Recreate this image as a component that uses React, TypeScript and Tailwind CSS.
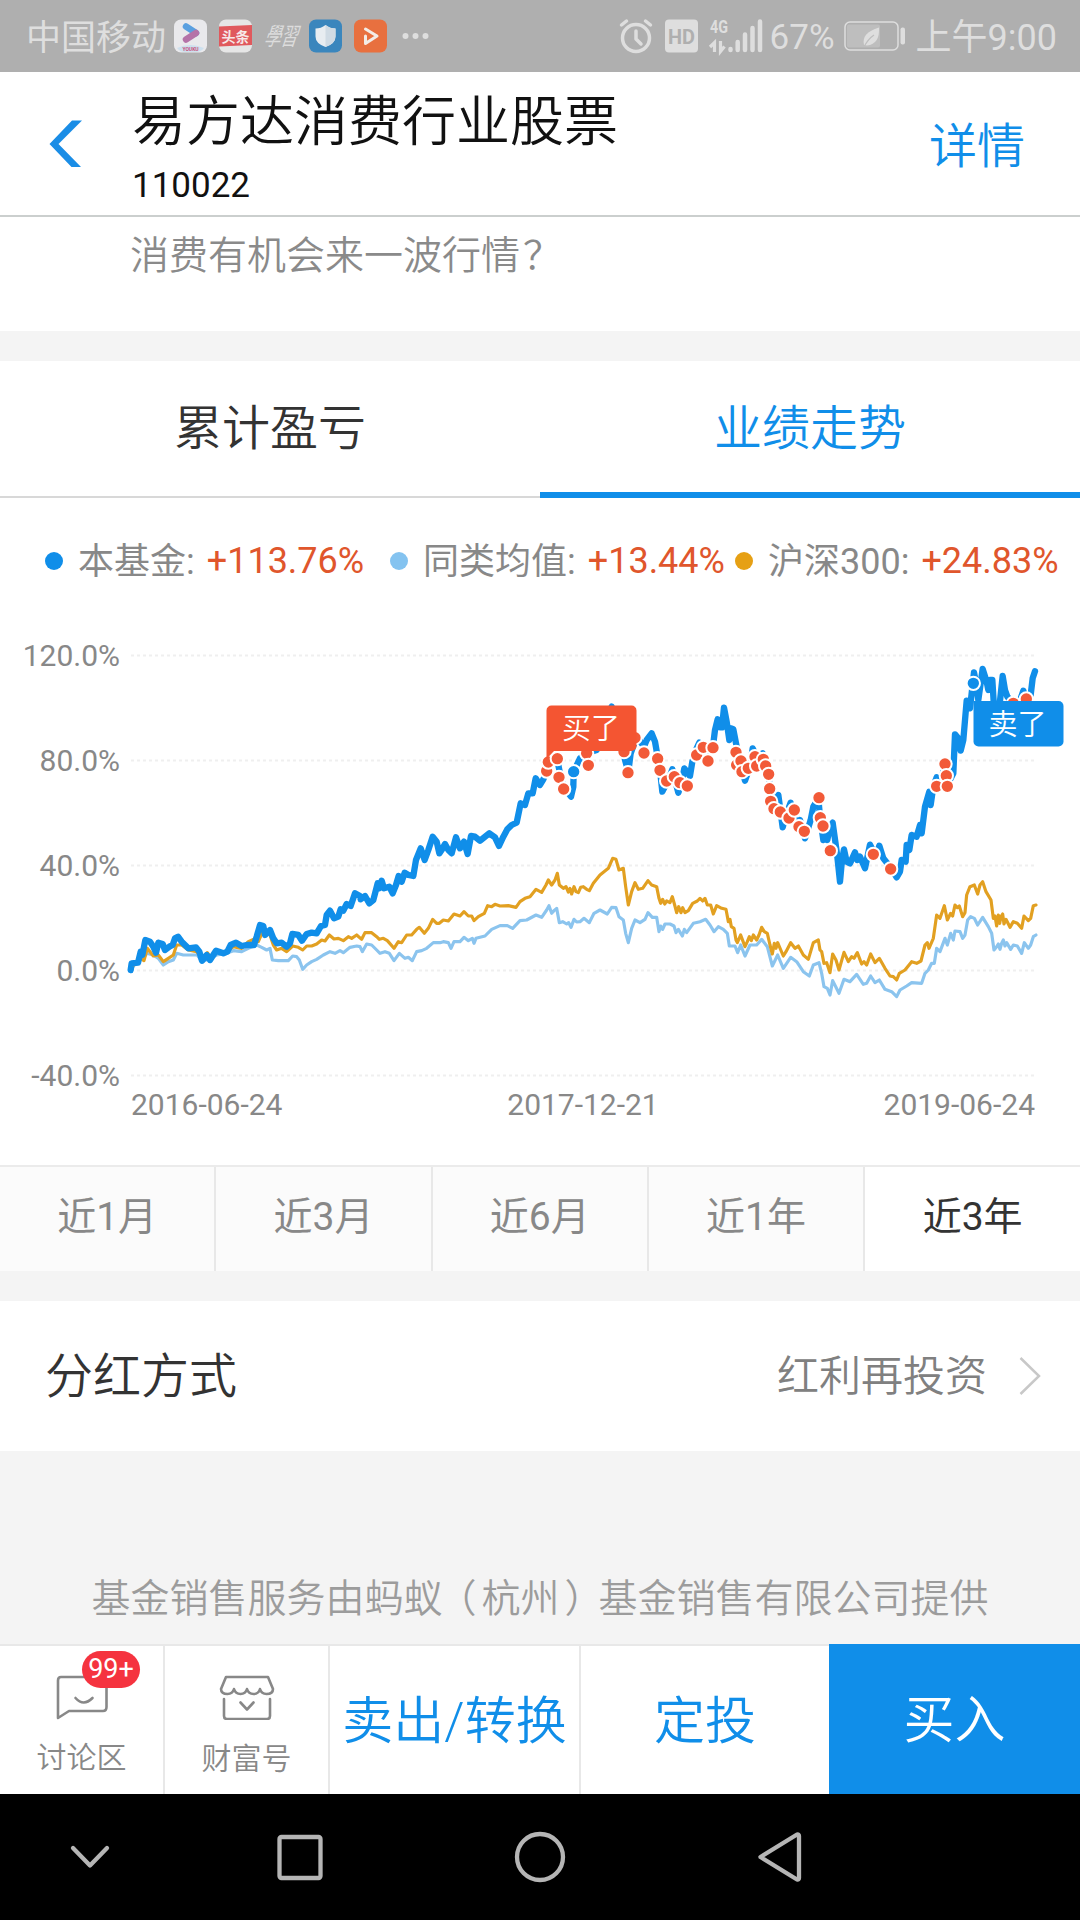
import React from 'react';

const legend = [
  { name: '本基金:', value: '+113.76%', dot: 'bg-[#108ee9]' },
  { name: '同类均值:', value: '+13.44%', dot: 'bg-[#84c3f0]' },
  { name: '沪深300:', value: '+24.83%', dot: 'bg-[#e6a014]' },
];

const ranges = ['近1月', '近3月', '近6月', '近1年', '近3年'];

const yLabels = ['120.0%', '80.0%', '40.0%', '0.0%', '-40.0%'];

// Series points, in thirds of a pixel from the plot origin
const fundLine =
  '62,990 65,970 84,968 92,935 97,945 106,900 120,905 130,920 138,938 145,908 158,912 165,930 178,920 188,915 195,895 204,890 215,905 235,925 258,922 268,935 276,962 290,945 300,960 318,932 340,940 352,935 362,915 378,908 395,918 410,915 432,915 440,890 450,855 460,858 465,885 480,870 490,895 500,910 515,908 530,920 540,910 547,882 565,885 576,902 590,882 605,878 620,880 633,858 645,855 650,825 660,812 672,835 685,830 692,808 700,812 710,792 722,798 735,760 750,768 752,778 765,768 778,790 790,780 803,730 808,745 815,722 822,745 838,740 848,760 858,735 866,708 875,725 884,698 895,705 910,708 918,660 932,625 944,660 955,630 968,590 980,605 988,640 995,630 1005,612 1015,630 1025,640 1038,592 1050,625 1062,605 1073,642 1083,588 1095,590 1110,602 1125,590 1138,580 1155,592 1167,618 1180,590 1192,568 1205,555 1220,548 1232,490 1245,495 1255,460 1268,460 1277,415 1290,435 1300,418 1315,380 1340,350 1350,400 1360,440 1383,470 1390,440 1391,395 1410,355 1430,340 1460,330 1490,230 1505,200 1530,280 1545,360 1555,395 1562,340 1580,290 1602,320 1610,300 1625,280 1635,305 1642,345 1650,390 1657,455 1675,420 1687,388 1695,420 1705,458 1715,430 1723,385 1740,408 1747,365 1760,325 1768,308 1780,320 1792,360 1810,310 1815,270 1823,238 1830,262 1836,262 1842,203 1850,245 1858,300 1862,265 1870,268 1880,320 1892,370 1905,422 1920,380 1928,325 1940,350 1958,340 1975,400 1980,445 1990,500 2005,465 2018,562 2030,520 2042,488 2060,560 2070,540 2085,595 2102,540 2110,500 2125,475 2130,530 2140,600 2145,550 2152,600 2160,560 2168,548 2176,605 2182,650 2190,725 2196,660 2202,628 2210,665 2220,670 2235,637 2242,660 2250,650 2265,685 2280,614 2298,650 2308,617 2320,655 2340,680 2360,712 2370,695 2375,660 2387,665 2390,615 2398,630 2405,585 2420,590 2430,555 2435,580 2445,500 2458,455 2462,495 2470,440 2480,412 2490,440 2505,370 2512,435 2530,400 2535,283 2545,295 2552,332 2560,300 2570,182 2580,205 2592,97 2600,140 2605,180 2618,87 2630,125 2635,150 2640,120 2647,120 2652,200 2665,230 2678,108 2685,150 2692,170 2705,185 2720,210 2740,152 2750,190 2762,165 2768,115 2775,94';

const hs300Line =
  '62,990 75,968 92,955 102,962 112,925 130,948 145,945 160,965 175,955 190,945 200,915 215,915 235,930 260,935 276,955 292,938 305,955 320,935 345,938 370,920 395,925 415,905 430,898 445,905 460,870 480,885 490,915 500,930 515,925 530,935 548,918 565,922 578,930 590,918 605,918 620,912 635,900 645,903 658,885 672,897 685,895 700,902 715,890 725,895 740,885 755,898 765,878 785,878 800,890 808,898 820,895 832,902 852,925 865,905 875,908 890,885 905,885 920,868 928,862 943,880 955,865 968,838 980,850 988,850 1000,840 1015,843 1032,822 1050,828 1062,815 1075,828 1085,828 1092,842 1105,830 1123,820 1133,797 1145,800 1155,793 1170,798 1195,797 1218,802 1230,785 1245,775 1260,770 1278,748 1295,757 1308,735 1315,720 1325,735 1335,720 1342,700 1348,735 1360,745 1368,740 1375,756 1380,745 1385,762 1392,740 1398,755 1405,758 1412,742 1420,740 1430,748 1438,752 1450,730 1470,705 1495,685 1508,655 1518,658 1527,690 1540,685 1547,740 1555,795 1565,755 1575,728 1585,748 1598,745 1614,722 1625,735 1640,740 1647,775 1652,790 1658,778 1664,792 1670,783 1680,788 1687,770 1694,795 1700,818 1706,800 1713,818 1718,803 1725,818 1735,812 1748,790 1762,783 1770,775 1778,783 1785,775 1792,795 1802,795 1810,822 1820,797 1835,805 1848,808 1855,845 1860,838 1864,860 1872,865 1878,900 1882,908 1892,885 1905,920 1912,905 1918,890 1924,902 1930,885 1940,900 1947,885 1955,862 1963,875 1972,880 1980,915 1987,942 1993,910 1998,925 2003,908 2020,948 2028,935 2042,908 2055,925 2065,918 2080,945 2095,958 2110,908 2125,900 2130,930 2135,935 2142,970 2150,968 2160,998 2168,942 2178,960 2187,990 2202,937 2215,965 2225,950 2232,955 2242,938 2255,972 2262,965 2270,975 2282,942 2295,968 2308,955 2325,985 2340,1008 2350,1010 2360,1020 2368,1000 2385,990 2405,965 2420,970 2433,963 2445,915 2452,908 2457,925 2470,895 2480,825 2490,835 2503,797 2512,840 2522,820 2528,828 2535,795 2542,803 2548,798 2558,830 2565,818 2570,765 2580,740 2593,735 2603,762 2610,735 2618,725 2628,755 2643,780 2650,835 2655,828 2660,858 2665,825 2669,850 2673,830 2678,822 2682,852 2688,838 2694,850 2700,862 2710,845 2722,850 2735,865 2742,828 2755,842 2762,835 2770,797 2778,795';

const averageLine =
  '62,990 80,965 100,955 110,940 130,945 145,955 160,975 175,965 190,960 200,940 220,945 250,945 262,945 276,965 300,955 320,945 350,940 370,932 395,935 415,925 440,915 455,922 470,930 480,925 487,960 505,962 520,962 535,962 548,948 560,950 568,960 578,988 590,975 605,965 620,958 640,945 660,935 675,940 690,932 700,938 720,922 740,918 750,920 757,935 770,912 785,915 800,930 810,940 825,935 838,940 852,962 868,940 885,955 895,952 907,962 920,935 935,932 950,925 970,908 990,908 1000,905 1015,908 1023,925 1032,905 1050,905 1062,892 1075,902 1087,895 1092,910 1098,895 1125,888 1145,868 1170,857 1192,857 1208,865 1230,842 1250,840 1278,825 1295,832 1310,810 1317,797 1325,820 1332,812 1340,805 1348,848 1358,845 1370,852 1376,848 1383,862 1392,838 1400,846 1410,845 1422,835 1438,848 1452,820 1470,810 1492,822 1505,802 1518,803 1527,830 1540,840 1547,880 1555,908 1565,865 1575,840 1590,848 1605,838 1614,818 1627,832 1640,832 1647,875 1652,858 1658,868 1665,852 1680,852 1692,858 1698,878 1705,868 1711,878 1717,888 1723,868 1730,878 1750,850 1770,845 1787,838 1800,855 1812,875 1825,860 1840,868 1852,880 1858,918 1875,918 1883,938 1892,915 1905,948 1920,915 1940,915 1955,898 1972,920 1987,978 2003,945 2020,985 2042,952 2060,965 2080,995 2098,1008 2110,975 2127,968 2135,1000 2142,1040 2152,1045 2160,1065 2168,1022 2187,1060 2202,1018 2220,1025 2240,1003 2260,1033 2270,1030 2282,1008 2295,1028 2308,1020 2325,1048 2345,1055 2360,1070 2370,1050 2390,1038 2405,1028 2435,1030 2445,1000 2455,990 2465,970 2473,970 2480,925 2490,935 2505,895 2512,915 2522,880 2530,900 2535,873 2550,875 2558,895 2565,885 2573,840 2582,830 2593,835 2603,855 2618,832 2635,860 2645,880 2652,930 2660,920 2665,912 2670,928 2675,910 2680,900 2685,918 2690,908 2702,928 2710,915 2722,918 2735,940 2743,908 2755,925 2762,915 2770,890 2778,885';

const buys = [
  [1310, 393], [1315, 366], [1342, 356], [1347, 412], [1361, 447], [1430, 340], [1435, 376],
  [1542, 335], [1575, 293], [1554, 398], [1602, 339], [1643, 356], [1650, 391], [1670, 423],
  [1693, 410], [1710, 428], [1732, 438], [1760, 345], [1780, 322], [1794, 363], [1809, 323],
  [1878, 337], [1880, 375], [1893, 363], [1896, 395], [1915, 385], [1935, 350], [1940, 378],
  [1960, 358], [1967, 378], [1976, 403], [1979, 446], [1982, 484], [1992, 506], [2011, 516],
  [2037, 534], [2053, 510], [2067, 560], [2083, 574], [2127, 473], [2131, 533], [2139, 558],
  [2161, 632], [2290, 643], [2342, 687], [2480, 439], [2505, 372], [2509, 407], [2512, 439],
  [2710, 190], [2749, 177],
];

const sells = [[1391, 395], [2590, 130]];

function StatusBar() {
  return (
    <div className="flex h-[72px] shrink-0 items-center bg-[#afafaf] pl-[26px] pr-[23px] text-[36px] text-[#dedede]">
      <span className="pt-[5px] text-[35px] leading-none">中国移动</span>
      <svg width="270" height="36" viewBox="0 0 270 36" className="ml-[6px] shrink-0">
        <rect x="2" y="1.500" width="33" height="33" rx="7" fill="#e9e9ec" />
        <path d="M14 8.500 24 15" stroke="#5aa0e0" strokeWidth="6.500" strokeLinecap="round" />
        <path d="M24 15 14 21.500" stroke="#b573a8" strokeWidth="6.500" strokeLinecap="round" />
        <path d="M5 30q13-6 27 0-3 4-8 4H13q-5 0-8-4" fill="#cde0ee" />
        <text x="18.500" y="33" fontSize="5" fontWeight="700" textAnchor="middle" fill="#c8527c">YOUKU</text>
        <rect x="47" y="1.500" width="33" height="33" rx="7" fill="#e6e6e6" />
        <path d="M47 8.500 80 7v20l-33 1.500z" fill="#e0595d" />
        <text x="63.500" y="23.500" fontSize="14" fontWeight="700" textAnchor="middle" fill="#f6e8e8">头条</text>
        <text x="0" y="0" fontSize="18" textAnchor="middle" fill="#dcdcdc" fontFamily="'Noto Sans CJK TC', sans-serif" transform="translate(108 27) skewX(-18) scale(.92 1.350)">學習</text>
        <rect x="137" y="1.500" width="33" height="33" rx="7" fill="#3a86bd" />
        <path d="M153.500 7q4.500 3.500 10 3.500v8q0 7-10 10.500-10-3.500-10-10.500v-8q5.500 0 10-3.500" fill="#e8edf1" />
        <path d="M153.500 7q4.500 3.500 10 3.500v8q0 7-10 10.500z" fill="#d0dbe4" />
        <rect x="182" y="1.500" width="33" height="33" rx="7" fill="#e8703f" />
        <path d="M193.500 18v7.500L205 18 193.500 11" fill="none" stroke="#f3ece6" strokeWidth="3" strokeLinecap="round" strokeLinejoin="round" />
        <circle cx="233.500" cy="18" r="3" fill="#dedede" />
        <circle cx="243.500" cy="18" r="3" fill="#dedede" />
        <circle cx="253.500" cy="18" r="3" fill="#dedede" />
      </svg>
      <svg width="146" height="36" viewBox="0 0 146 36" className="ml-auto shrink-0 overflow-visible" fill="none" stroke="#dedede">
        <circle cx="17" cy="20" r="13.500" strokeWidth="3.500" />
        <path d="M17 13v8l5 5" strokeWidth="3.500" strokeLinecap="round" strokeLinejoin="round" />
        <path d="M2.500 7 7.500 3M31.500 7 26.500 3" strokeWidth="3.500" strokeLinecap="round" />
        <rect x="46" y="1.500" width="33" height="33" rx="4" fill="#dedede" stroke="none" />
        <text x="62.500" y="25.500" fontSize="21" fontWeight="700" textAnchor="middle" fill="#afafaf" stroke="none" textLength="27" lengthAdjust="spacingAndGlyphs">HD</text>
        <text x="91" y="15" fontSize="19" fontWeight="700" fill="#dedede" stroke="none" textLength="18" lengthAdjust="spacingAndGlyphs">4G</text>
        <path d="M91 29 95.500 24.500V34M101.500 23v10.500l4-5" strokeWidth="3.200" />
        <path d="M111.500 31v1M118.700 24v8M126 16.500V32M133.500 10v22M141 3.500V32" strokeWidth="4.500" strokeLinecap="round" />
      </svg>
      <span className="ml-[5px] pt-[3px] text-[35px] leading-none">67%</span>
      <svg width="62" height="32" viewBox="0 0 62 32" className="ml-[9px] shrink-0">
        <rect x="1" y="2" width="53" height="28" rx="5" fill="none" stroke="#dedede" strokeWidth="1.500" />
        <rect x="3" y="4.500" width="33" height="23" rx="2" fill="#bebebe" />
        <path d="M20 25q-3-12 15-17.500Q36 24 23 25.500z" fill="#dedede" />
        <path d="M20 27q4-8 10-12" stroke="#bebebe" strokeWidth="1.200" fill="none" />
        <rect x="56.500" y="7.500" width="4.500" height="17" rx="2" fill="#dedede" />
      </svg>
      <span className="ml-[10px] pt-[4px] leading-none">上午9:00</span>
    </div>
  );
}

function Header() {
  return (
    <div className="flex h-[145px] shrink-0 items-center border-b-2 border-[#cbcfce] bg-white pr-[55px]">
      <svg width="34" height="48" viewBox="0 0 34 48" className="ml-[49px] shrink-0">
        <path d="M23 0.500h10L9.500 24 32 47H22.500L.5 24z" fill="#1a8de6" />
      </svg>
      <div className="ml-[49px] flex flex-1 flex-col pt-[10px] text-[#111]">
        <h1 className="text-[54px] leading-[64px] [font-weight:350]">易方达消费行业股票</h1>
        <span className="mt-[11px] text-[35px] leading-[40px]">110022</span>
      </div>
      <a className="pt-[7px] text-[48px] leading-none text-[#108ee9] [font-weight:350]">详情</a>
    </div>
  );
}

function Chart() {
  return (
    <svg width="1080" height="500" viewBox="0 630 1080 500" className="mt-[44px] block shrink-0">
      {yLabels.map((label, i) => (
        <g key={label}>
          <text x="120" y={666 + i * 105} fontSize="30" textAnchor="end" fill="#888">{label}</text>
          <line x1="131" x2="1035" y1={655.5 + i * 105} y2={655.5 + i * 105} stroke="#efefef" strokeWidth="2" strokeDasharray="3 3" />
        </g>
      ))}
      <g fontSize="30" fill="#888">
        <text x="131" y="1115">2016-06-24</text>
        <text x="583" y="1115" textAnchor="middle">2017-12-21</text>
        <text x="1035" y="1115" textAnchor="end">2019-06-24</text>
      </g>
      <g transform="translate(110 640) scale(.33333)" fill="none" strokeLinejoin="round" strokeLinecap="round">
        <polyline points={averageLine} stroke="#8bc4ee" strokeWidth="9.500" />
        <polyline points={hs300Line} stroke="#e2a021" strokeWidth="9.500" />
        <polyline points={fundLine} stroke="#108ee9" strokeWidth="19" />
        {sells.map(([x, y]) => (
          <circle key={x} cx={x} cy={y} r="20" fill="#108ee9" stroke="#fff" strokeWidth="6" />
        ))}
        {buys.map(([x, y]) => (
          <circle key={`${x}-${y}`} cx={x} cy={y} r="20" fill="#f25a38" stroke="#fff" strokeWidth="6" />
        ))}
      </g>
      <path d="M551.500 705.500h80a5 5 0 0 1 5 5V746a5 5 0 0 1-5 5H554l-7.500 8v-48.500a5 5 0 0 1 5-5" fill="#f45532" />
      <text x="591" y="739" fontSize="29" fontWeight="350" textAnchor="middle" fill="#fff">买了</text>
      <path d="M973.500 701h85a5 5 0 0 1 5 5v35.500a5 5 0 0 1-5 5h-80a5 5 0 0 1-5-5z" fill="#108ee9" />
      <text x="1017.500" y="734.500" fontSize="29" fontWeight="350" textAnchor="middle" fill="#fff">卖了</text>
    </svg>
  );
}

function BottomBar() {
  return (
    <div className="flex h-[150px] shrink-0 bg-white text-[51px] text-[#108ee9] [font-weight:350]">
      <div className="relative flex w-[165px] flex-col items-center border-r-2 border-t-2 border-[#e8e8e8] text-[30px] text-[#888]">
        <svg width="54" height="46" viewBox="0 0 54 46" className="mt-[28px]" fill="none" stroke="#888" strokeWidth="2.600" strokeLinejoin="round" strokeLinecap="round">
          <path d="M6 3h42q3.500 0 3.500 3.500V33q0 4-3.500 4H14L3 44V6.500Q3 3 6 3z" />
          <path d="M20.500 24q8 9 17 0" />
        </svg>
        <span className="mt-[23px] leading-none">讨论区</span>
        <span className="absolute left-[82px] top-[5px] flex h-[37px] w-[58px] items-center justify-center rounded-full bg-[#f5333f] pb-[1px] text-[27px] font-normal leading-none text-white">99+</span>
      </div>
      <div className="flex w-[165px] flex-col items-center border-r-2 border-t-2 border-[#e8e8e8] text-[30px] text-[#888]">
        <svg width="56" height="46" viewBox="0 0 56 46" className="mt-[28px]" fill="none" stroke="#888" strokeWidth="2.600" strokeLinejoin="round" strokeLinecap="round">
          <path d="M7 3h42l5 12q0 5-6.500 5-5 0-6.500-5-1.500 5-6.500 5T28 15q-1.500 5-6.500 5T15 15q-1.500 5-6.500 5Q2 20 2 15z" />
          <path d="M5 25v17q0 3 3 3h40q3 0 3-3V25M21.500 28.500l6.500 7 6.500-7" />
        </svg>
        <span className="mt-[24px] leading-none">财富号</span>
      </div>
      <button className="w-[251px] border-r-2 border-t-2 border-[#e8e8e8] pt-[4px]">卖出/转换</button>
      <button className="w-[248px] border-t-2 border-[#e8e8e8] pt-[4px]">定投</button>
      <button className="flex-1 bg-[#108ee9] pt-[5px] text-white">买入</button>
    </div>
  );
}

function NavBar() {
  return (
    <div className="flex h-[126px] shrink-0 items-center bg-black">
      <svg width="1080" height="126" viewBox="0 0 1080 126" fill="none" stroke="#b5b5b5" strokeWidth="4.300" strokeLinecap="round" strokeLinejoin="round">
        <path d="M73 54l17 17.500L107 54" />
        <rect x="279.500" y="43" width="41" height="41" rx="2" />
        <circle cx="540" cy="63" r="23" />
        <path d="M797 40.500 760.500 63 797 85.500q2 .5 2-1.500V42q0-2-2-1.500z" />
      </svg>
    </div>
  );
}

function App() {
  return (
    <div className="flex h-[1920px] w-[1080px] flex-col overflow-hidden bg-[#f4f4f4] font-[Roboto,'Noto_Sans_CJK_SC',sans-serif]">
      <StatusBar />
      <Header />
      <div className="h-[114px] shrink-0 bg-white pl-[130px] pt-[15px] text-[39px] leading-[48px] text-[#8a8a8a] [font-weight:350]">
        消费有机会来一波行情<span className="ml-[3px]">？</span>
      </div>

      <div className="mt-[30px] flex h-[137px] shrink-0 bg-white text-[48px] [font-weight:350]">
        <div className="flex flex-1 items-center justify-center border-b-2 border-[#d8d8d8] pt-px text-[#333]">累计盈亏</div>
        <div className="flex flex-1 items-center justify-center border-b-6 border-[#108ee9] pt-[5px] text-[#108ee9]">业绩走势</div>
      </div>

      <div className="flex h-[667px] shrink-0 flex-col bg-white">
        <div className="mt-[38px] flex h-[50px] shrink-0 pl-[45px] text-[36px]">
          {legend.map((item) => (
            <div key={item.name} className="flex w-[345px] shrink-0 items-center whitespace-nowrap">
              <span className={`mr-[15px] h-[18px] w-[18px] rounded-full ${item.dot}`} />
              <span className="pt-px text-[#888]">{item.name}</span>
              <span className="ml-[12px] text-[#e0562c]">{item.value}</span>
            </div>
          ))}
        </div>
        <Chart />
      </div>

      <div className="flex h-[106px] shrink-0 border-t-2 border-[#ebebeb] text-[39px]">
        {ranges.map((range, i) => (
          <div
            key={range}
            className={
              i === ranges.length - 1
                ? 'flex flex-1 items-center justify-center bg-white pb-[3px] text-[#333]'
                : 'flex w-[216.300px] items-center justify-center border-r-2 border-[#e8e8e8] bg-[#fbfbfb] pb-[3px] text-[#888]'
            }
          >
            {range}
          </div>
        ))}
      </div>

      <div className="mt-[30px] flex h-[150px] shrink-0 items-center bg-white pl-[45px] pr-[38px] [font-weight:350]">
        <span className="flex-1 pt-[2px] text-[48px] text-[#333]">分红方式</span>
        <span className="text-[42px] text-[#808080]">红利再投资</span>
        <svg width="24" height="40" viewBox="0 0 24 40" className="ml-[31px]">
          <path d="M2.500 2 21 20 2.500 38" fill="none" stroke="#c8c8c8" strokeWidth="2.500" />
        </svg>
      </div>

      <div className="flex flex-1 items-end justify-center pb-[16px] text-[39px] text-[#9c9c9c] [font-weight:350]">
        <p>
          基金销售服务由蚂蚁
          <span className="-ml-[5px] mr-[5px]">（</span>
          杭州
          <span className="-mr-[5px] ml-[5px]">）</span>
          基金销售有限公司提供
        </p>
      </div>

      <BottomBar />
      <NavBar />
    </div>
  );
}

export default App;
